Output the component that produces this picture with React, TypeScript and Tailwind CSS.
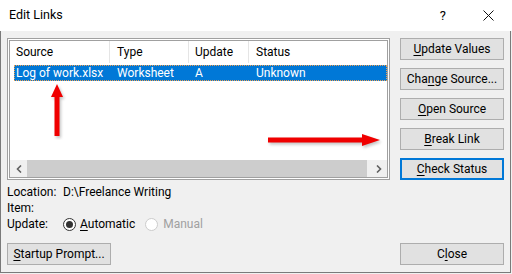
import React from "react";

function U({ children }: { children: React.ReactNode }) {
  return <span className="underline underline-offset-[2px] decoration-[1px]">{children}</span>;
}

function Btn({ children, focused }: { children: React.ReactNode; focused?: boolean }) {
  return (
    <div
      className={
        "w-[104px] h-[22px] flex items-center justify-center bg-[#e1e1e1] leading-none " +
        (focused ? "border-2 border-[#0078d7]" : "border border-[#adadad]")
      }
    >
      <span>{children}</span>
    </div>
  );
}

export default function App() {
  return (
    <div className="w-[512px] h-[274px] bg-[#f0f0f0] font-['Roboto',sans-serif] text-[12px] text-black relative overflow-hidden">
      {/* title bar */}
      <div className="h-[31px] w-[512px] bg-white flex items-center pl-[9px]">
        <span className="text-[12.5px] leading-none">Edit Links</span>
        <span className="ml-auto mr-[37px] text-[13px] leading-none">?</span>
        <svg width="11" height="11" viewBox="0 0 11 11" className="mr-[18px]">
          <path d="M0.5 0.5 L10.5 10.5 M10.5 0.5 L0.5 10.5" stroke="#111" strokeWidth="1" />
        </svg>
      </div>

      {/* body */}
      <div className="h-[242px] w-[511px] border-l border-r border-b border-[#7a7a7a] pl-[6px] pr-[6px] pt-[7px] flex flex-col">
        <div className="flex gap-[10px]">
          {/* list frame */}
          <div className="w-[383px] h-[142px] border border-[#a0a0a0] bg-white p-[1px]">
            <div className="w-full h-full border border-[#a0a0a0] bg-white flex flex-col">
              {/* header */}
              <div className="h-[22px] flex items-stretch leading-none">
                <div className="w-[100px] border-r border-[#e5e5e5] pl-[6px] flex items-center">Source</div>
                <div className="w-[79px] border-r border-[#e5e5e5] pl-[7px] flex items-center">Type</div>
                <div className="w-[60px] border-r border-[#e5e5e5] pl-[6px] flex items-center">Update</div>
                <div className="flex-1 pl-[7px] flex items-center">Status</div>
              </div>
              {/* selected row */}
              <div className="mt-[2px] ml-[4px] h-[16px] bg-[#0078d7] text-white border border-dotted border-[#f0a050] flex items-center leading-none">
                <div className="w-[95px] pl-[1px]">Log of work.xlsx</div>
                <div className="w-[79px] pl-[7px]">Worksheet</div>
                <div className="w-[60px] pl-[6px]">A</div>
                <div className="flex-1 pl-[7px]">Unknown</div>
              </div>
              <div className="flex-1" />
              {/* horizontal scrollbar */}
              <div className="h-[17px] flex bg-[#f0f0f0]">
                <div className="w-[17px] h-full flex items-center justify-center">
                  <svg width="6" height="8" viewBox="0 0 6 8">
                    <path d="M5 0.5 L1.5 4 L5 7.5" stroke="#606060" strokeWidth="1.6" fill="none" />
                  </svg>
                </div>
                <div className="w-[340px] h-full bg-[#cdcdcd]" />
                <div className="flex-1" />
                <div className="w-[17px] h-full flex items-center justify-center">
                  <svg width="6" height="8" viewBox="0 0 6 8">
                    <path d="M1 0.5 L4.5 4 L1 7.5" stroke="#606060" strokeWidth="1.6" fill="none" />
                  </svg>
                </div>
              </div>
            </div>
          </div>

          {/* buttons */}
          <div className="flex flex-col gap-[8px]">
            <Btn><U>U</U>pdate Values</Btn>
            <Btn>Cha<U>n</U>ge Source...</Btn>
            <Btn><U>O</U>pen Source</Btn>
            <Btn><U>B</U>reak Link</Btn>
            <Btn focused><U>C</U>heck Status</Btn>
          </div>
        </div>

        {/* info */}
        <div className="mt-[4px] flex flex-col leading-[16px]">
          <div className="h-[16px] flex">
            <div className="w-[56px]">Location:</div>
            <div>D:\Freelance Writing</div>
          </div>
          <div className="h-[16px] flex">
            <div className="w-[56px]">Item:</div>
          </div>
          <div className="h-[16px] flex items-center">
            <div className="w-[56px]">Update:</div>
            <div className="w-[13px] h-[13px] rounded-full border border-[#333333] bg-white flex items-center justify-center">
              <div className="w-[7px] h-[7px] rounded-full bg-[#333333]" />
            </div>
            <div className="ml-[4px]"><U>A</U>utomatic</div>
            <div className="ml-[10px] w-[13px] h-[13px] rounded-full border border-[#cccccc] bg-white" />
            <div className="ml-[5px] text-[#a0a0a0]">Manual</div>
          </div>
        </div>

        {/* bottom buttons */}
        <div className="mt-[11px] flex justify-between">
          <Btn><U>S</U>tartup Prompt...</Btn>
          <Btn>C<U>l</U>ose</Btn>
        </div>
      </div>

      {/* red annotation arrows */}
      <svg className="absolute left-[48px] top-[82px]" width="20" height="58" viewBox="0 0 20 58">
        <defs>
          <filter id="sh1" x="-50%" y="-50%" width="200%" height="200%">
            <feGaussianBlur stdDeviation="1.5" />
          </filter>
        </defs>
        <g opacity="0.35" filter="url(#sh1)" transform="translate(1.5,2)">
          <polygon points="9,2 3,15 15,15" fill="#555" />
          <rect x="6.5" y="14" width="5" height="40" fill="#555" />
        </g>
        <polygon points="9,2 3,15 15,15" fill="#f00000" />
        <rect x="6.5" y="14" width="5" height="40" fill="#f00000" />
      </svg>
      <svg className="absolute left-[266px] top-[130px]" width="120" height="22" viewBox="0 0 120 22">
        <defs>
          <filter id="sh2" x="-20%" y="-50%" width="140%" height="200%">
            <feGaussianBlur stdDeviation="1.5" />
          </filter>
        </defs>
        <g opacity="0.35" filter="url(#sh2)" transform="translate(1.5,2)">
          <rect x="2" y="7.5" width="96" height="5" fill="#555" />
          <polygon points="96,4 114,10 96,16" fill="#555" />
        </g>
        <rect x="2" y="7.5" width="96" height="5" fill="#f00000" />
        <polygon points="96,4 114,10 96,16" fill="#f00000" />
      </svg>
    </div>
  );
}
